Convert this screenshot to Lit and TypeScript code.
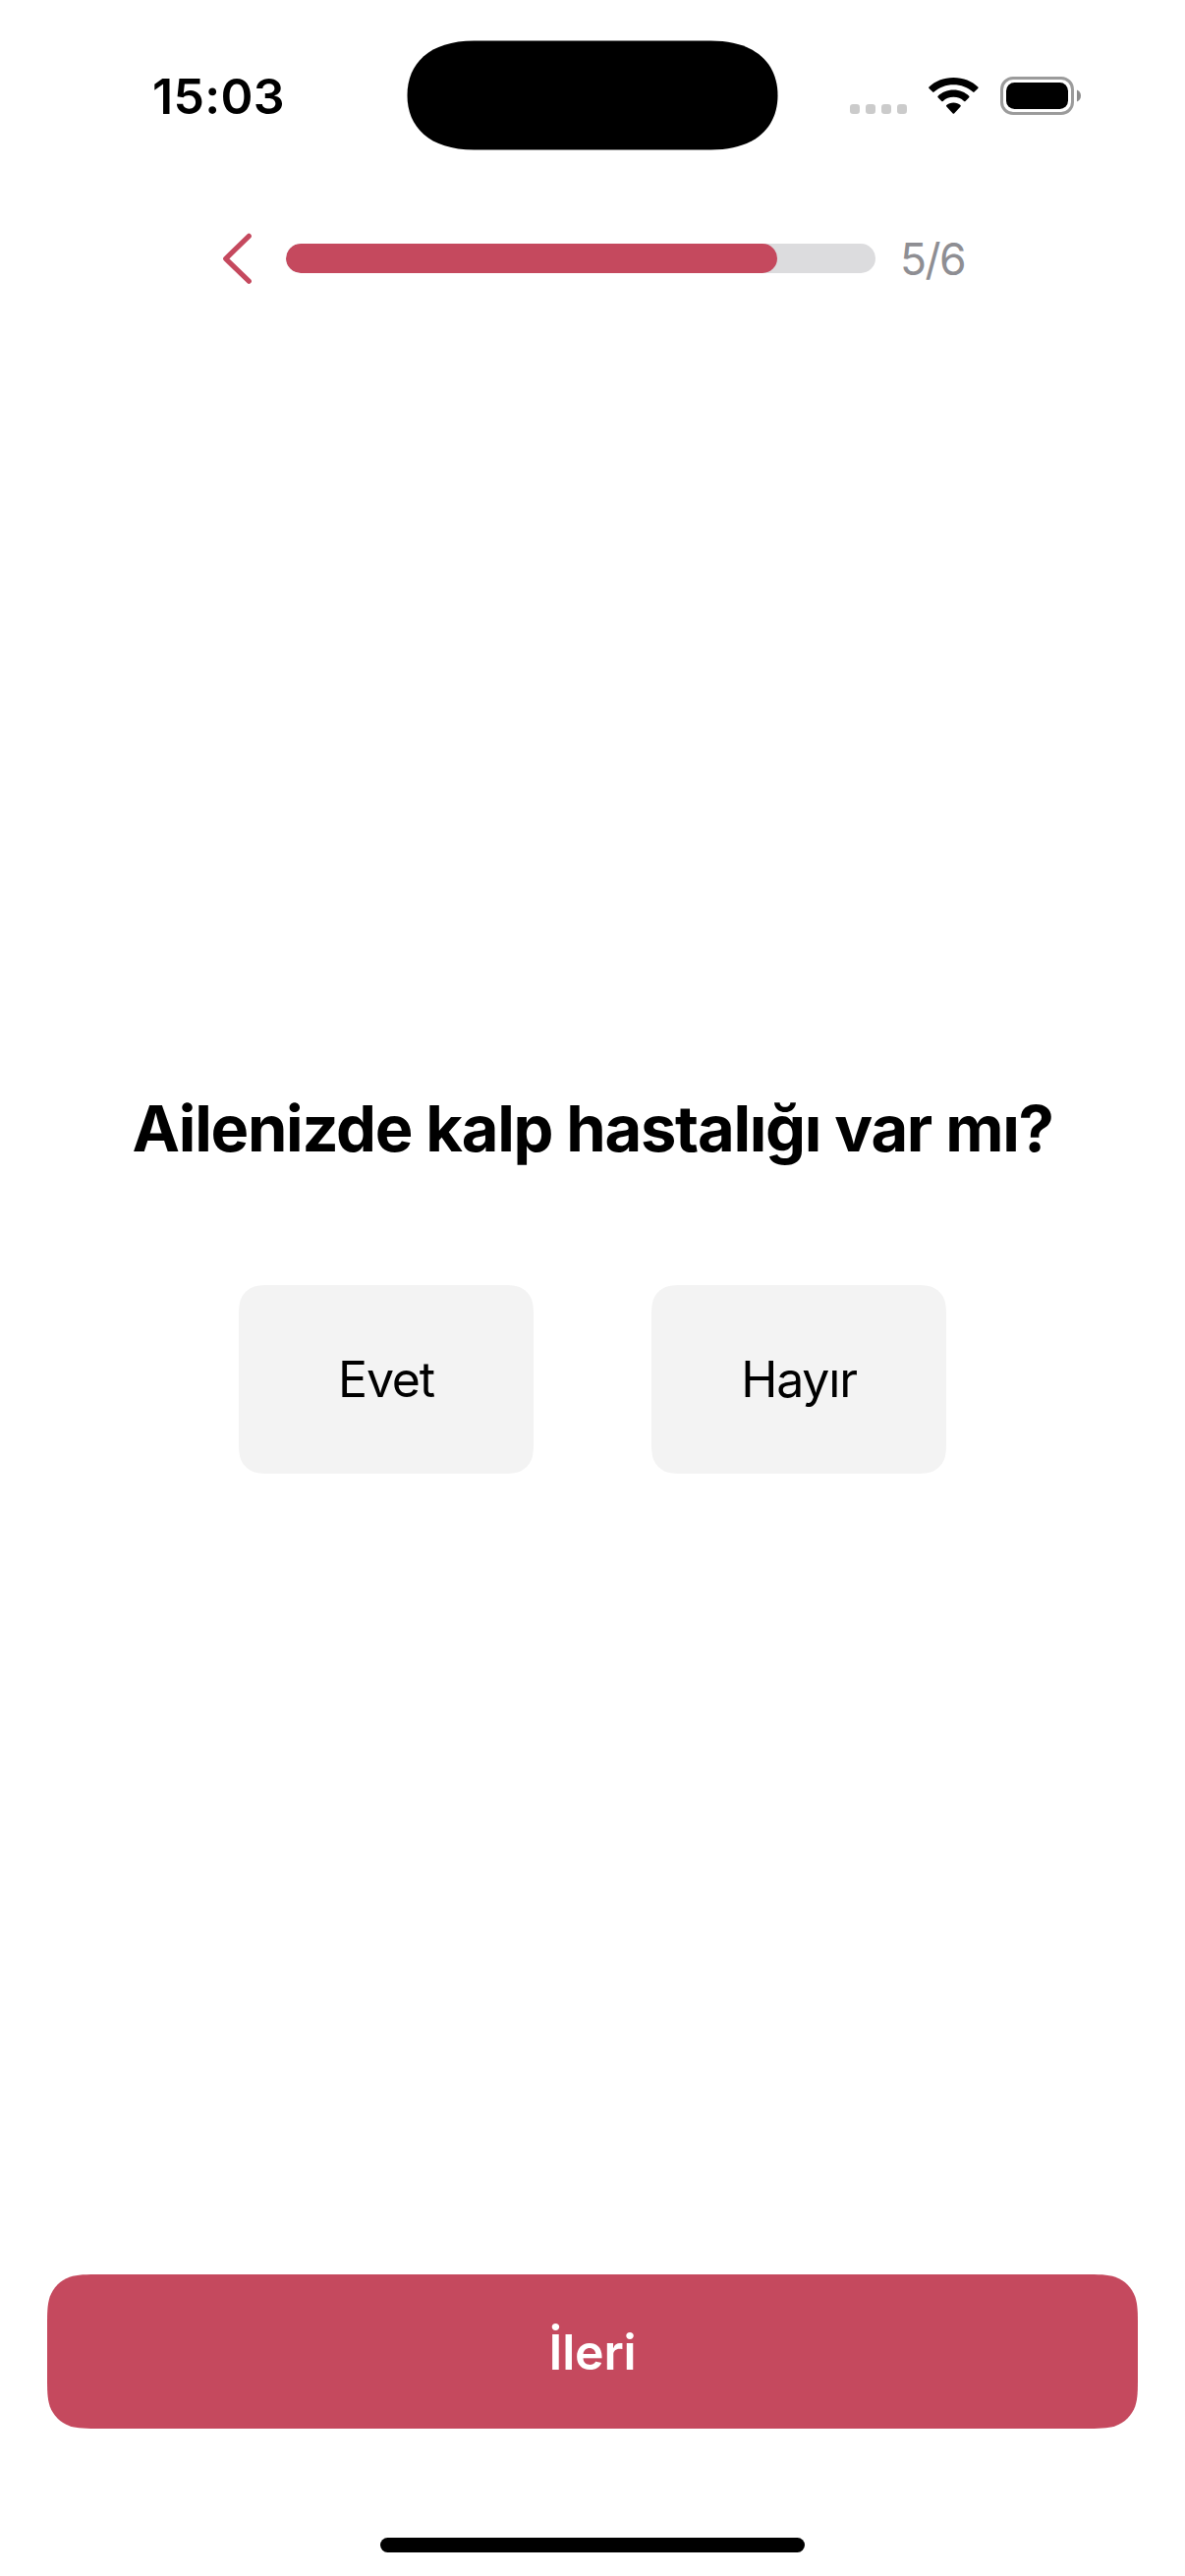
import { LitElement, html, css, svg, unsafeCSS } from "lit";
import { customElement, property } from "lit/decorators.js";

/** Outline of a w×h box whose corners have continuous curvature of radius r. */
function smoothRect(w: number, h: number, r: number): string {
  const a = 1.52866 * r, b = 1.08849 * r, c = 0.86841 * r;
  const d = 0.63149 * r, e = 0.07491 * r, f = 0.37282 * r, g = 0.16906 * r;
  return [
    `M${a} 0 H${w - a}`,
    `C${w - b} 0 ${w - c} 0 ${w - d} ${e}`,
    `C${w - f} ${g} ${w - g} ${f} ${w - e} ${d}`,
    `C${w} ${c} ${w} ${b} ${w} ${a}`,
    `V${h - a}`,
    `C${w} ${h - b} ${w} ${h - c} ${w - e} ${h - d}`,
    `C${w - g} ${h - f} ${w - f} ${h - g} ${w - d} ${h - e}`,
    `C${w - c} ${h} ${w - b} ${h} ${w - a} ${h}`,
    `H${a}`,
    `C${b} ${h} ${c} ${h} ${d} ${h - e}`,
    `C${f} ${h - g} ${g} ${h - f} ${e} ${h - d}`,
    `C0 ${h - c} 0 ${h - b} 0 ${h - a}`,
    `V${a}`,
    `C0 ${b} 0 ${c} ${e} ${d}`,
    `C${g} ${f} ${f} ${g} ${d} ${e}`,
    `C${c} 0 ${b} 0 ${a} 0Z`,
  ].join(" ");
}

@customElement("status-bar")
class StatusBar extends LitElement {
  @property() time = "";

  static styles = css`
    :host {
      display: grid;
      grid-template-columns: 414px 378px 1fr;
      height: 195px;
      box-sizing: border-box;
      align-items: start;
    }
    .time {
      padding: 68px 0 0 155px;
      font-size: 50px;
      font-weight: 600;
      line-height: 60px;
      letter-spacing: 0.3px;
    }
    .island {
      display: block;
      margin-top: 41px;
    }
    .icons {
      display: flex;
      padding: 78px 0 0 73px;
    }
    .dots { margin-right: 22px; }
    .wifi { margin-right: 21px; }
  `;

  render() {
    return html`
      <div class="time">${this.time}</div>
      <svg class="island" width="378" height="112" viewBox="0 0 378 112">
        <path d="M68.5 .5H309.500C355.500 .5 377.500 24 377.500 56S355.500 111.500 309.500 111.500H68.500C22.500 111.500 .5 88 .5 56S22.500 .5 68.500 .5Z" />
      </svg>
      <div class="icons">
        <svg class="dots" width="58" height="40" viewBox="0 0 58 40" fill="#cbcbcb">
          ${[0, 16, 32, 48].map((x) => svg`<rect x=${x} y="28" width="10" height="10" rx="3.2" />`)}
        </svg>
        <svg class="wifi" width="52" height="40" viewBox="0 0 52 40">
          <path d="M25.400 1C35.500 1 44.300 4.700 50.300 10.600Q51 11.300 50.300 12L46.600 15.600Q45.900 16.200 45.200 15.600C40 10.800 33 8.200 25.400 8.200S10.800 10.800 5.600 15.600Q4.900 16.200 4.200 15.600L.5 12Q-.2 11.300 .5 10.600C6.500 4.700 15.300 1 25.400 1Z" />
          <path d="M25.400 13.600C31.800 13.600 37.200 16 41.200 19.800Q41.900 20.500 41.200 21.200L37.500 24.900Q36.800 25.500 36.100 24.900C33.200 22.300 29.600 20.800 25.400 20.800S17.600 22.300 14.700 24.900Q14 25.500 13.300 24.900L9.600 21.200Q8.900 20.500 9.600 19.800C13.600 16 19 13.600 25.400 13.600Z" />
          <path d="M25.400 26.400C28.300 26.400 30.700 27.400 32.500 29.100Q33.200 29.800 32.500 30.500L26.100 37.500Q25.400 38.200 24.700 37.500L18.300 30.500Q17.600 29.800 18.300 29.100C20.100 27.400 22.500 26.400 25.400 26.400Z" />
        </svg>
        <svg width="84" height="40" viewBox="0 0 84 40">
          <rect x="1.500" y="1.500" width="72" height="36" rx="11.500" fill="none" stroke="#9b9b9b" stroke-width="3" />
          <rect x="6" y="6" width="63" height="27" rx="8.500" />
          <path d="M78 13.500C80.500 14.500 82 16.800 82 19.500S80.500 24.500 78 25.500Z" fill="#8c8c8c" />
        </svg>
      </div>
    `;
  }
}

@customElement("quiz-progress")
class QuizProgress extends LitElement {
  @property({ type: Number }) step = 0;
  @property({ type: Number }) total = 1;

  static styles = css`
    :host {
      display: flex;
      align-items: center;
      height: 136px;
      padding-left: 225px;
    }
    .back {
      display: block;
      flex: none;
      margin-right: 34px;
    }
    .track {
      width: 600px;
      height: 30px;
      border-radius: 15px;
      background: #dcdcde;
      overflow: hidden;
    }
    .fill {
      height: 30px;
      border-radius: 15px;
      background: #c5495e;
    }
    .count {
      padding: 2px 0 0 25px;
      font-size: 44.5px;
      line-height: 54px;
      color: #8e8e93;
      letter-spacing: -1.6px;
    }
  `;

  render() {
    return html`
      <svg class="back" width="32" height="56" viewBox="0 0 32 56">
        <path d="M28.300 5.300L4.700 28.300L28.300 51.200" fill="none" stroke="#c5495e" stroke-width="5.200" stroke-linecap="round" stroke-linejoin="round" />
      </svg>
      <div class="track"><div class="fill" style="width:${(this.step / this.total) * 100}%"></div></div>
      <div class="count">${this.step}/${this.total}</div>
    `;
  }
}

@customElement("app-root")
class AppRoot extends LitElement {
  static styles = css`
    :host {
      display: flex;
      flex-direction: column;
      width: 1206px;
      height: 2622px;
      background: #fff;
      color: #000;
      font-family: Inter, "Liberation Sans", sans-serif;
      overflow: hidden;
    }
    .question {
      margin: 778px 0 0;
      text-align: center;
      font-size: 65px;
      font-weight: 700;
      line-height: 80px;
      letter-spacing: -1.28px;
      white-space: nowrap;
    }
    .answers {
      display: flex;
      justify-content: center;
      gap: 120px;
      margin-top: 119px;
    }
    button {
      display: flex;
      align-items: center;
      justify-content: center;
      padding: 0;
      border: 0;
      font-family: inherit;
      font-size: 50px;
      color: #000;
    }
    .answer {
      width: 300px;
      height: 192px;
      background: #f3f3f3;
      letter-spacing: -1.2px;
      clip-path: path("${unsafeCSS(smoothRect(300, 192, 24))}");
    }
    .next {
      flex: none;
      width: 1110px;
      height: 157px;
      margin: auto 48px 111px;
      background: #c5495e;
      color: #fff;
      font-weight: 560;
      letter-spacing: -0.2px;
      clip-path: path("${unsafeCSS(smoothRect(1110, 157, 36))}");
    }
    .home {
      flex: none;
      width: 432px;
      height: 15px;
      margin: 0 auto 24px;
      border-radius: 7.5px;
      background: #000;
    }
  `;

  render() {
    return html`
      <status-bar time="15:03"></status-bar>
      <quiz-progress step="5" total="6"></quiz-progress>
      <h1 class="question">Ailenizde kalp hastalığı var mı?</h1>
      <div class="answers">
        ${["Evet", "Hayır"].map((a) => html`<button class="answer">${a}</button>`)}
      </div>
      <button class="next">İleri</button>
      <div class="home"></div>
    `;
  }
}
